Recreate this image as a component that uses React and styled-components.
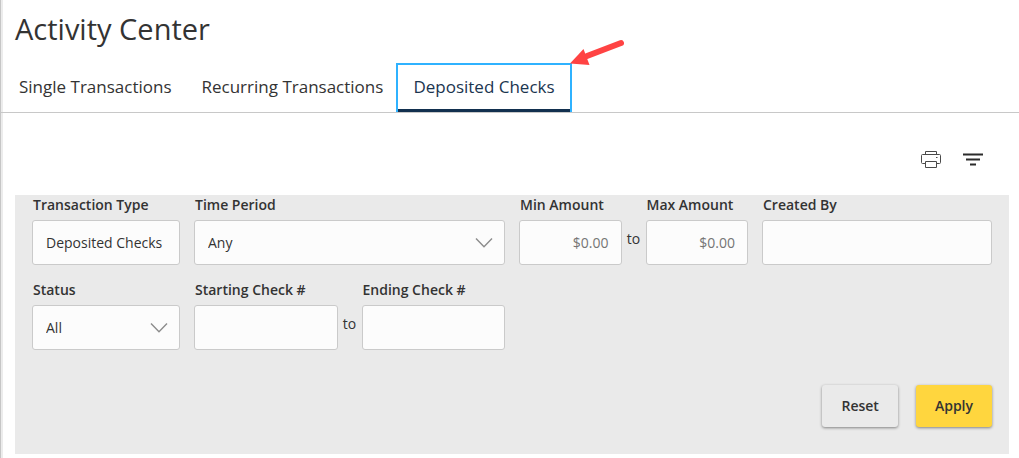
import React, { useState } from "react";
import styled, { createGlobalStyle, css } from "styled-components";

const GlobalStyle = createGlobalStyle`
  * {
    box-sizing: border-box;
  }
  body {
    margin: 0;
    background: #ffffff;
  }
  body, button, input, select {
    font-family: "Open Sans", "Noto Sans", sans-serif;
    color: #333333;
  }
`;

const Page = styled.main`
  min-height: 100vh;
  border-left: 1px solid #c6c6c6;
  box-shadow: inset 2px 0 0 #ececec;
`;

const Title = styled.h1`
  margin: 0;
  padding: 9px 14px 0;
  font-size: 29px;
  line-height: 40px;
  font-weight: 400;
`;

const Tabs = styled.div`
  display: flex;
  margin-top: 16px;
  padding-left: 3px;
  border-bottom: 1px solid #c8c8c8;
`;

const Tab = styled.button`
  position: relative;
  height: 47px;
  padding: 0 15px;
  border: none;
  border-bottom: 3px solid transparent;
  background: #ffffff;
  font-size: 17px;
  line-height: 44px;
  font-weight: 400;
  cursor: pointer;
  outline: none;
  ${({ $active }) =>
    $active &&
    css`
      color: #1b3550;
      border-bottom-color: #12304f;
      box-shadow: -2px -2px 0 #2fb2ff, 2px -2px 0 #2fb2ff, -2px 0 0 #2fb2ff,
        2px 0 0 #2fb2ff;
    `}
`;

const Pointer = styled.svg`
  position: absolute;
  left: 100%;
  bottom: 100%;
  margin-left: -1px;
  pointer-events: none;
`;

const Toolbar = styled.div`
  display: flex;
  justify-content: flex-end;
  gap: 20px;
  padding: 36px 35px 24px 0;
`;

const IconButton = styled.button`
  display: flex;
  padding: 0;
  border: none;
  background: none;
  cursor: pointer;
`;

const Panel = styled.form`
  margin: 0 10px 4px 14px;
  padding: 0 17px 27px;
  background: #eaeaea;
`;

const Fields = styled.div`
  display: grid;
  grid-template-columns: 148fr 311fr 229fr 230fr;
  gap: 15px 14px;
`;

const Range = styled.div`
  display: flex;
  align-items: flex-end;
`;

const To = styled.span`
  width: 24px;
  flex: none;
  padding-bottom: 16px;
  text-align: center;
  font-size: 14px;
  line-height: 20px;
`;

const FieldBox = styled.div`
  flex: 1;
  min-width: 0;
`;

const Label = styled.label`
  display: block;
  height: 25px;
  padding-left: 1px;
  font-size: 14px;
  line-height: 20px;
  font-weight: 600;
  white-space: nowrap;
`;

const control = css`
  display: block;
  width: 100%;
  height: 45px;
  padding: 0 13px;
  border: 1px solid #cacaca;
  border-radius: 3px;
  background: #fcfcfc;
  font-size: 14px;
  outline: none;
`;

const Input = styled.input`
  ${control}
  padding-right: 12px;
  text-align: ${({ $align }) => $align || "left"};
  &::placeholder {
    color: #757575;
  }
`;

const SelectWrap = styled.div`
  position: relative;
`;

const Select = styled.select`
  ${control}
  appearance: none;
`;

const Chevron = styled.svg`
  position: absolute;
  right: 12px;
  top: 17px;
  pointer-events: none;
`;

const Actions = styled.div`
  display: flex;
  justify-content: flex-end;
  gap: 18px;
  margin-top: 35px;
`;

const Button = styled.button`
  height: 42px;
  padding: 0 19px 2px;
  border: none;
  border-radius: 3px;
  background: ${({ $primary }) => ($primary ? "#ffd63e" : "#eaeaea")};
  box-shadow: 0 1px 3px rgba(0, 0, 0, 0.45);
  font-size: 14px;
  font-weight: 600;
  cursor: pointer;
`;

const tabNames = [
  "Single Transactions",
  "Recurring Transactions",
  "Deposited Checks",
];

const TextField = ({ id, label, ...rest }) => (
  <FieldBox>
    <Label htmlFor={id}>{label}</Label>
    <Input id={id} type="text" {...rest} />
  </FieldBox>
);

const SelectField = ({ id, label, options }) => (
  <FieldBox>
    <Label htmlFor={id}>{label}</Label>
    <SelectWrap>
      <Select id={id}>
        {options.map((option) => (
          <option key={option}>{option}</option>
        ))}
      </Select>
      <Chevron width="18" height="12" viewBox="0 0 18 12" aria-hidden="true">
        <path d="M1 1.5 9 9.8 17 1.5" fill="none" stroke="#8c8c8c" strokeWidth="1.4" />
      </Chevron>
    </SelectWrap>
  </FieldBox>
);

const App = () => {
  const [active, setActive] = useState("Deposited Checks");

  return (
    <>
      <GlobalStyle />
      <Page>
        <Title>Activity Center</Title>
        <Tabs role="tablist">
          {tabNames.map((name) => (
            <Tab
              key={name}
              type="button"
              role="tab"
              aria-selected={active === name}
              $active={active === name}
              onClick={() => setActive(name)}
            >
              {name}
              {name === "Deposited Checks" && (
                <Pointer width="56" height="32" viewBox="0 0 56 32" aria-hidden="true">
                  <path d="M52 10 18 23" stroke="#ff4343" strokeWidth="6" strokeLinecap="round" />
                  <path d="M1 30.500 14.500 16 20.500 32Z" fill="#ff4343" />
                </Pointer>
              )}
            </Tab>
          ))}
        </Tabs>

        <Toolbar>
          <IconButton type="button" aria-label="Print">
            <svg width="22" height="22" viewBox="0 0 22 22" fill="none" stroke="#4a4a4a">
              <path d="M5.500 5V2.500H16.500V5M5.500 14.500H2.500Q1.500 14.500 1.500 13.500V6.500Q1.500 5.500 2.500 5.500H19.500Q20.500 5.500 20.500 6.500V13.500Q20.500 14.500 19.500 14.500H16.500" />
              <path d="M5.500 12.500H16.500V18.500H5.500Z" />
              <path d="M16 8.500H17.500" />
            </svg>
          </IconButton>
          <IconButton type="button" aria-label="Filter">
            <svg width="22" height="22" viewBox="0 0 22 22" fill="none" stroke="#2b2b2b" strokeWidth="2">
              <path d="M1 5.500H21M4 10.500H18M8 15.500H14" />
            </svg>
          </IconButton>
        </Toolbar>

        <Panel onSubmit={(e) => e.preventDefault()}>
          <Fields>
            <TextField
              id="type"
              label="Transaction Type"
              defaultValue="Deposited Checks"
              readOnly
            />
            <SelectField id="period" label="Time Period" options={["Any"]} />
            <Range>
              <TextField id="min" label="Min Amount" placeholder="$0.00" $align="right" />
              <To>to</To>
              <TextField id="max" label="Max Amount" placeholder="$0.00" $align="right" />
            </Range>
            <TextField id="created" label="Created By" />
            <SelectField id="status" label="Status" options={["All"]} />
            <Range>
              <TextField id="start" label="Starting Check #" />
              <To>to</To>
              <TextField id="end" label="Ending Check #" />
            </Range>
          </Fields>
          <Actions>
            <Button type="reset">Reset</Button>
            <Button type="submit" $primary>
              Apply
            </Button>
          </Actions>
        </Panel>
      </Page>
    </>
  );
};

export default App;
